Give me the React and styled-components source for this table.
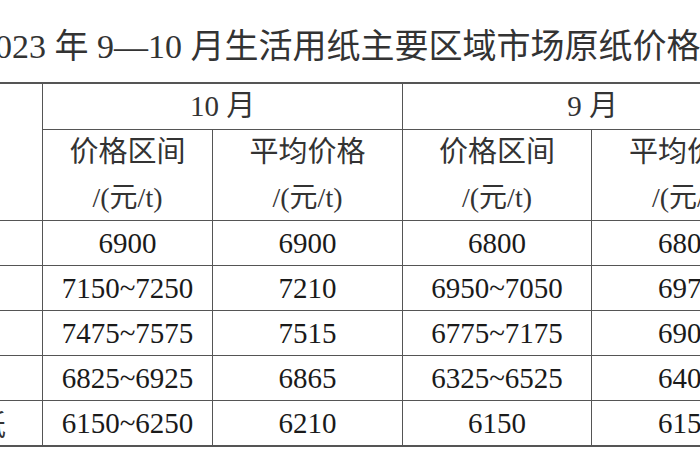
import React from 'react'
import styled, { createGlobalStyle } from 'styled-components'

const GlobalStyle = createGlobalStyle`
  html, body {
    margin: 0;
    padding: 0;
    background: #ffffff;
    overflow: hidden;
  }
`

const Page = styled.div`
  width: 900px;
  margin-left: -118px;
  font-family: 'Liberation Serif', 'Noto Sans CJK SC', serif;
  color: #222;
`

const Title = styled.div`
  padding: 30px 0 0 96px;
  margin-bottom: 18px;
  height: 34px;
  line-height: 34px;
  font-size: 34px;
  color: #333;
  white-space: nowrap;
`

const Table = styled.table`
  border-collapse: collapse;
  table-layout: fixed;
  width: 900px;
  border-top: 2px solid #555;
  border-bottom: 2px solid #555;
`

const HeadCell = styled.th`
  border: 1.5px solid #555;
  border-top: none;
  font-weight: 400;
  font-size: 29px;
  color: #333;
  text-align: center;
  vertical-align: middle;
  height: ${(p) => p.$h || 44}px;
  line-height: 45px;
  padding: 0;
  white-space: nowrap;
`

const Cell = styled.td`
  border: 1.5px solid #555;
  font-size: 29px;
  color: #1a1a1a;
  text-align: center;
  height: 44px;
  padding: 0;
  white-space: nowrap;
`

const Label = styled(Cell)`
  color: #333;
`

const Unit = styled.span`
  font-size: 28px;
`

const rows = [
  { name: '华北', oct: ['6900', '6900'], sep: ['6800', '6800'] },
  { name: '华东', oct: ['7150~7250', '7210'], sep: ['6950~7050', '6970'] },
  { name: '华南', oct: ['7475~7575', '7515'], sep: ['6775~7175', '6900'] },
  { name: '西南', oct: ['6825~6925', '6865'], sep: ['6325~6525', '6400'] },
  { name: '木浆纸', oct: ['6150~6250', '6210'], sep: ['6150', '6150'] },
]

const colWidths = [160, 170, 190, 189, 191]

export default function App() {
  return (
    <Page>
      <GlobalStyle />
      <Title>2023 年 9—10 月生活用纸主要区域市场原纸价格情况</Title>
      <Table>
        <colgroup>
          {colWidths.map((w, i) => (
            <col key={i} style={{ width: w }} />
          ))}
        </colgroup>
        <thead>
          <tr>
            <HeadCell rowSpan={2}>区域</HeadCell>
            <HeadCell colSpan={2}>10 月</HeadCell>
            <HeadCell colSpan={2}>9 月</HeadCell>
          </tr>
          <tr>
            {['价格区间', '平均价格', '价格区间', '平均价格'].map((t, i) => (
              <HeadCell key={i} $h={88}>
                {t}
                <br />
                <Unit>/(元/t)</Unit>
              </HeadCell>
            ))}
          </tr>
        </thead>
        <tbody>
          {rows.map((r) => (
            <tr key={r.name}>
              <Label>{r.name}</Label>
              <Cell>{r.oct[0]}</Cell>
              <Cell>{r.oct[1]}</Cell>
              <Cell>{r.sep[0]}</Cell>
              <Cell>{r.sep[1]}</Cell>
            </tr>
          ))}
        </tbody>
      </Table>
    </Page>
  )
}
